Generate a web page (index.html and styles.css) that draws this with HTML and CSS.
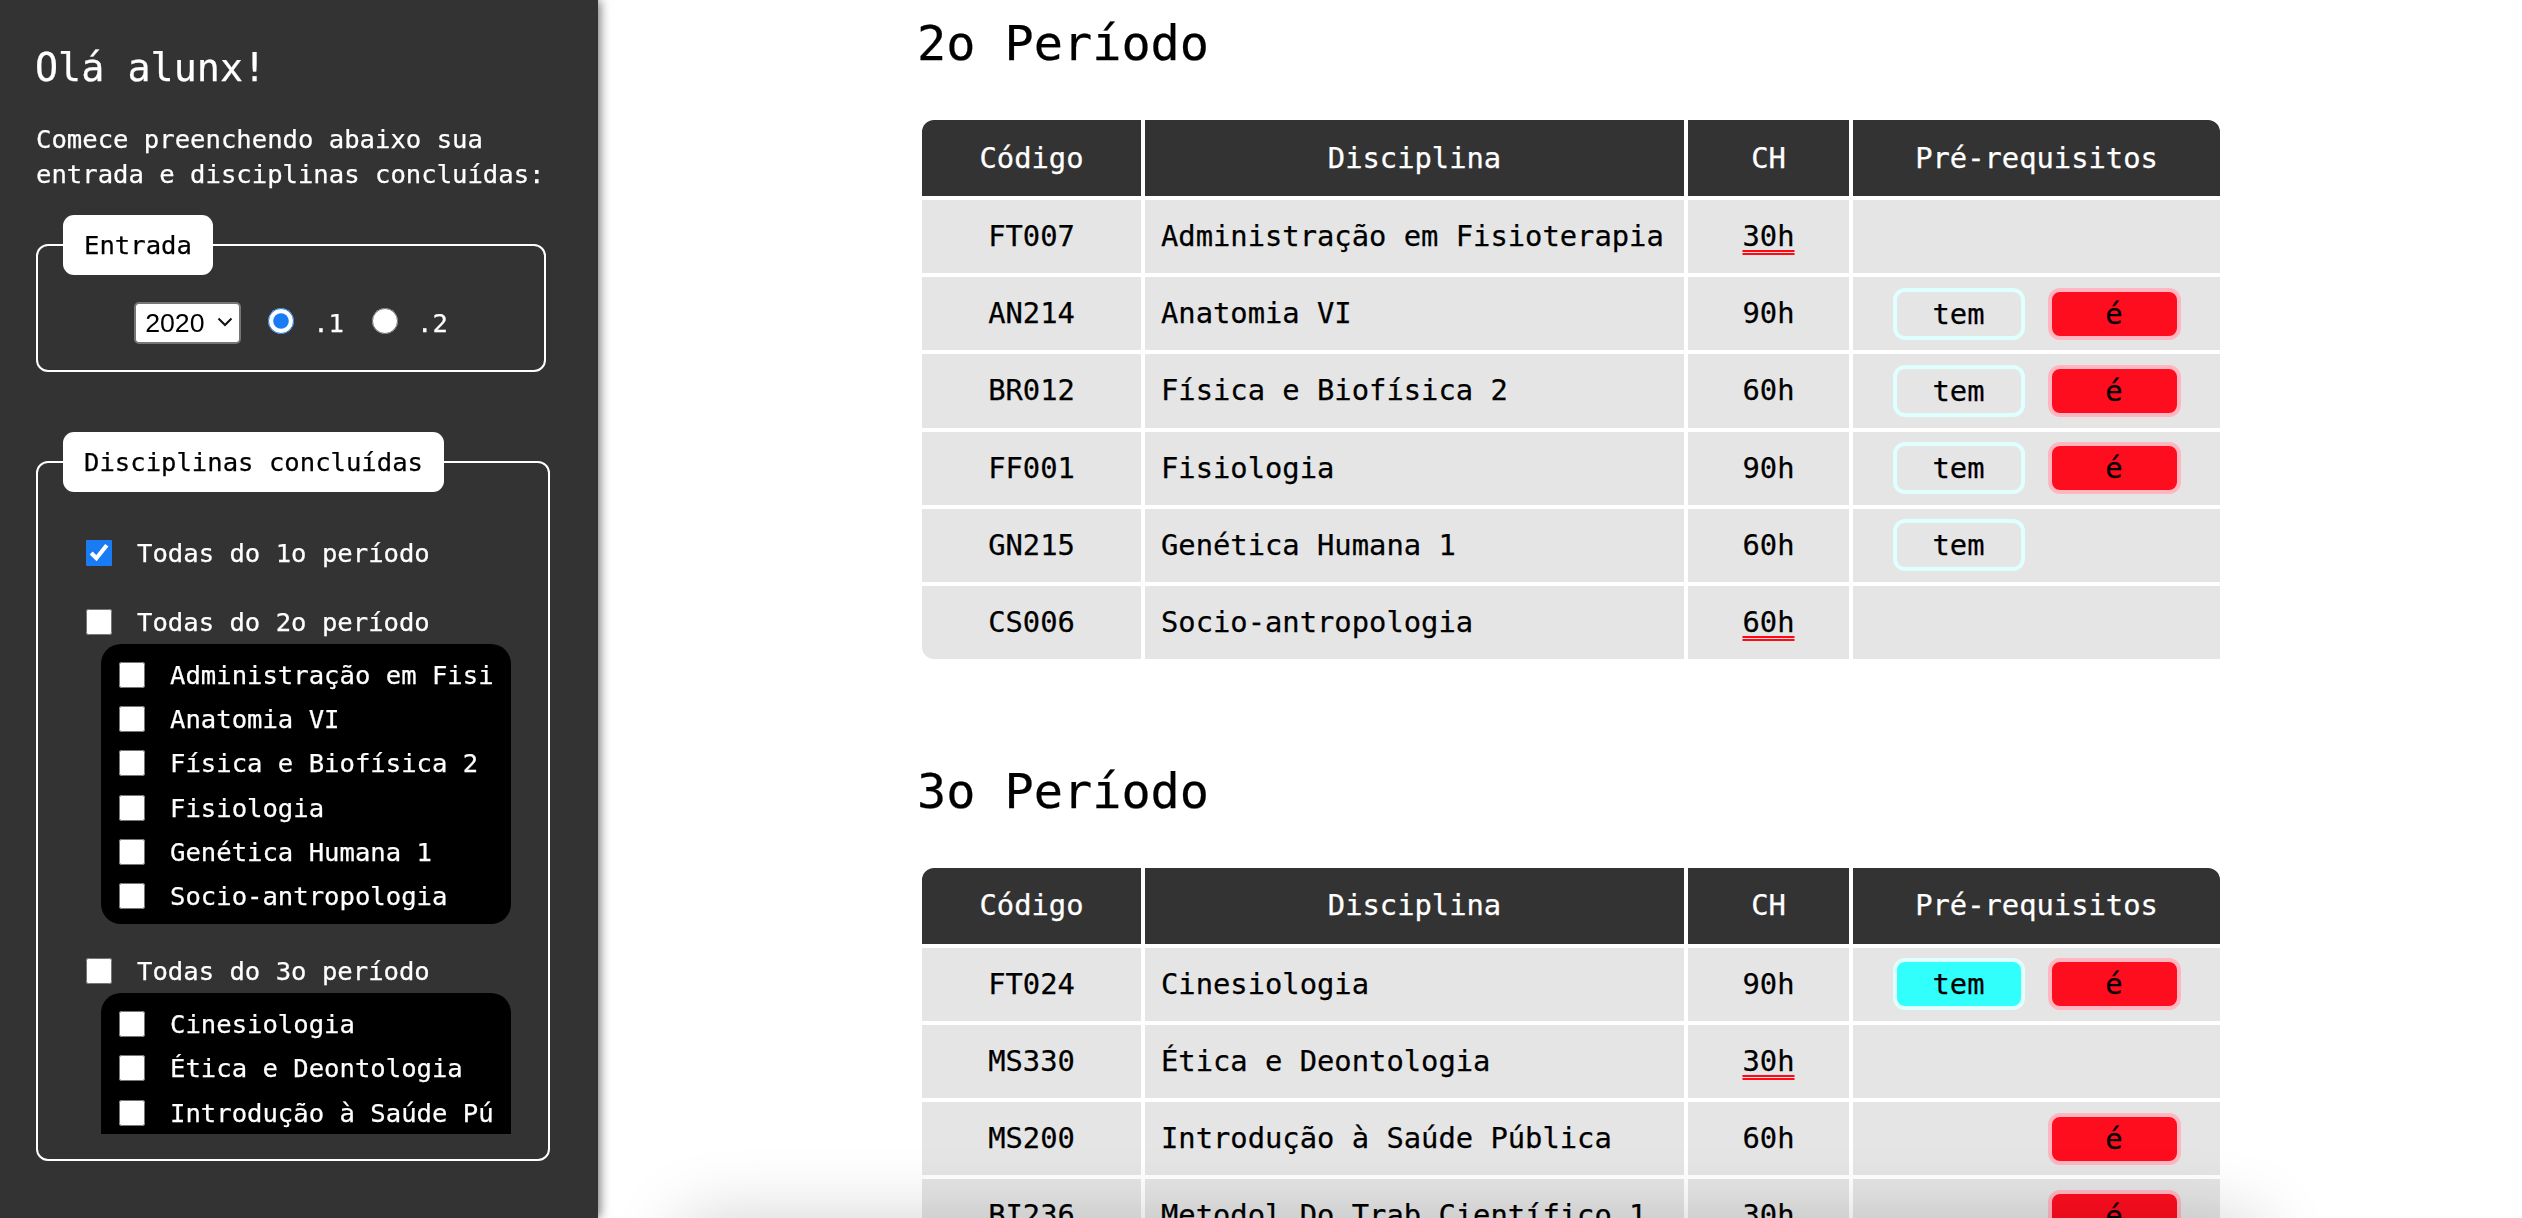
FILE: index.html
```html
<!DOCTYPE html>
<html lang="pt-BR">
<head>
<meta charset="utf-8">
<title>Grade</title>
<link rel="stylesheet" href="styles.css">
</head>
<body>
<aside class="sidebar">
  <h1 class="hello">Olá alunx!</h1>
  <p class="intro">Comece preenchendo abaixo sua entrada e disciplinas concluídas:</p>

  <fieldset class="box entrada">
    <legend>Entrada</legend>
    <div class="entrada-row">
      <span class="select-wrap">
        <select class="ano"><option>2020</option></select>
        <svg class="chev" width="16" height="10" viewBox="0 0 16 10"><polyline points="1.5,1.5 8,8 14.5,1.5" fill="none" stroke="#111" stroke-width="2"/></svg>
      </span>
      <label class="radio"><input type="radio" name="sem" checked><span>.1</span></label>
      <label class="radio"><input type="radio" name="sem"><span>.2</span></label>
    </div>
  </fieldset>

  <fieldset class="box concluidas">
    <legend>Disciplinas concluídas</legend>
    <div class="scroll">
      <div class="group">
        <label class="all"><input type="checkbox" checked><span>Todas do 1o período</span></label>
      </div>
      <div class="group">
        <label class="all"><input type="checkbox"><span>Todas do 2o período</span></label>
        <ul class="list">
          <li><label><input type="checkbox"><span>Administração em Fisioterapia</span></label></li>
          <li><label><input type="checkbox"><span>Anatomia VI</span></label></li>
          <li><label><input type="checkbox"><span>Física e Biofísica 2</span></label></li>
          <li><label><input type="checkbox"><span>Fisiologia</span></label></li>
          <li><label><input type="checkbox"><span>Genética Humana 1</span></label></li>
          <li><label><input type="checkbox"><span>Socio-antropologia</span></label></li>
        </ul>
      </div>
      <div class="group">
        <label class="all"><input type="checkbox"><span>Todas do 3o período</span></label>
        <ul class="list">
          <li><label><input type="checkbox"><span>Cinesiologia</span></label></li>
          <li><label><input type="checkbox"><span>Ética e Deontologia</span></label></li>
          <li><label><input type="checkbox"><span>Introdução à Saúde Pública</span></label></li>
          <li><label><input type="checkbox"><span>Metodol Do Trab Científico 1</span></label></li>
        </ul>
      </div>
    </div>
  </fieldset>
</aside>

<main class="content">
  <section class="periodo">
    <h2>2o Período</h2>
    <table class="grade">
      <thead>
        <tr><th class="c-cod">Código</th><th class="c-dis">Disciplina</th><th class="c-ch">CH</th><th class="c-pre">Pré-requisitos</th></tr>
      </thead>
      <tbody>
        <tr><td class="cod">FT007</td><td class="dis">Administração em Fisioterapia</td><td class="ch"><span class="warn">30h</span></td><td class="pre"></td></tr>
        <tr><td class="cod">AN214</td><td class="dis">Anatomia VI</td><td class="ch">90h</td><td class="pre"><div class="badges"><span class="badge tem">tem</span><span class="badge eh">é</span></div></td></tr>
        <tr><td class="cod">BR012</td><td class="dis">Física e Biofísica 2</td><td class="ch">60h</td><td class="pre"><div class="badges"><span class="badge tem">tem</span><span class="badge eh">é</span></div></td></tr>
        <tr><td class="cod">FF001</td><td class="dis">Fisiologia</td><td class="ch">90h</td><td class="pre"><div class="badges"><span class="badge tem">tem</span><span class="badge eh">é</span></div></td></tr>
        <tr><td class="cod">GN215</td><td class="dis">Genética Humana 1</td><td class="ch">60h</td><td class="pre"><div class="badges"><span class="badge tem">tem</span><span class="badge eh off">é</span></div></td></tr>
        <tr><td class="cod">CS006</td><td class="dis">Socio-antropologia</td><td class="ch"><span class="warn">60h</span></td><td class="pre"></td></tr>
      </tbody>
    </table>
  </section>

  <section class="periodo">
    <h2>3o Período</h2>
    <table class="grade">
      <thead>
        <tr><th class="c-cod">Código</th><th class="c-dis">Disciplina</th><th class="c-ch">CH</th><th class="c-pre">Pré-requisitos</th></tr>
      </thead>
      <tbody>
        <tr><td class="cod">FT024</td><td class="dis">Cinesiologia</td><td class="ch">90h</td><td class="pre"><div class="badges"><span class="badge tem on">tem</span><span class="badge eh">é</span></div></td></tr>
        <tr><td class="cod">MS330</td><td class="dis">Ética e Deontologia</td><td class="ch"><span class="warn">30h</span></td><td class="pre"></td></tr>
        <tr><td class="cod">MS200</td><td class="dis">Introdução à Saúde Pública</td><td class="ch">60h</td><td class="pre"><div class="badges"><span class="badge tem off">tem</span><span class="badge eh">é</span></div></td></tr>
        <tr><td class="cod">BI236</td><td class="dis">Metodol Do Trab Científico 1</td><td class="ch"><span class="warn">30h</span></td><td class="pre"><div class="badges"><span class="badge tem off">tem</span><span class="badge eh">é</span></div></td></tr>
      </tbody>
    </table>
  </section>
</main>
<div class="dock"></div>
</body>
</html>
```

FILE: styles.css
```css
html, body {
  margin: 0;
  padding: 0;
  height: 100%;
}
body {
  display: flex;
  height: 100vh;
  overflow: hidden;
  background: #fff;
  font-family: "DejaVu Sans Mono", monospace;
  color: #000;
  -webkit-text-stroke: 0.25px currentColor;
}

/* ---------- sidebar ---------- */
.sidebar {
  position: relative;
  z-index: 2;
  flex: 0 0 598px;
  box-sizing: border-box;
  height: 100vh;
  background: #333;
  color: #fff;
  padding: 45px 20px 0 36px;
  box-shadow: 2px 0 10px rgba(0, 0, 0, 0.55);
}
.hello {
  margin: 0 0 0 -1px;
  font-size: 38.4px;
  line-height: 46px;
  font-weight: normal;
}
.intro {
  margin: 31px 0 0;
  font-size: 25.6px;
  line-height: 34.5px;
  width: 540px;
}
.box {
  margin: 0;
  border: 2px solid #fff;
  border-radius: 12px;
  padding: 0;
  min-width: 0;
  box-sizing: border-box;
}
.box legend {
  margin-left: 25px;
  background: #fff;
  color: #000;
  border-radius: 11px;
  padding: 0 21px;
  font-size: 25.6px;
  line-height: 60px;
  height: 60px;
}
.entrada {
  width: 510px;
  margin-top: 24px;
}
.entrada-row {
  display: flex;
  align-items: center;
  justify-content: center;
  height: 42px;
  padding: 27px 0 26px;
}
.select-wrap {
  position: relative;
  display: block;
  margin-right: 27px;
}
.ano {
  appearance: none;
  -webkit-appearance: none;
  display: block;
  box-sizing: border-box;
  width: 107px;
  height: 42px;
  margin: 0;
  padding: 0 0 0 9px;
  border: 2px solid #767676;
  border-radius: 5px;
  background: #fff;
  color: #000;
  font-family: "Liberation Sans", Arial, sans-serif;
  font-size: 26.7px;
  -webkit-text-stroke: 0;
}
.chev {
  position: absolute;
  left: 83px;
  top: 15px;
  pointer-events: none;
}
.radio {
  display: flex;
  align-items: center;
  font-size: 25.6px;
  line-height: 30px;
}
.radio input {
  width: 26px;
  height: 26px;
  margin: -5px 19px 0 0;
  accent-color: #1a7cf5;
}
.radio + .radio {
  margin-left: 28px;
}

.concluidas {
  width: 514px;
  margin-top: 60px;
  padding: 0 0 25px;
}
.scroll {
  overflow: hidden;
  padding-top: 39px;
  box-sizing: border-box;
  height: 642px;
}
.group {
  margin-bottom: 25px;
}
.group + .group + .group {
  margin-top: 2px;
}
.all, .list label {
  display: flex;
  align-items: center;
  height: 44px;
  font-size: 25.6px;
  white-space: nowrap;
}
.all {
  padding-left: 48px;
}
.all input, .list input {
  width: 26px;
  height: 26px;
  margin: 0 25px 0 0;
  flex: 0 0 26px;
  accent-color: #1a7cf5;
}
.list {
  list-style: none;
  margin: 0 0 0 63px;
  width: 410px;
  box-sizing: border-box;
  padding: 9px 19px 6px 18px;
  background: #000;
  border-radius: 20px;
}
.list li {
  margin: 0;
  height: 44.2px;
  overflow: hidden;
}
.list label {
  height: 44.2px;
  overflow: hidden;
}
.list label span {
  overflow: hidden;
}

/* ---------- main ---------- */
.content {
  flex: 1 1 auto;
  overflow: hidden;
  padding-left: 322px;
}
.periodo h2 {
  margin: 15px 0 0 -3px;
  font-size: 48.5px;
  line-height: 56px;
  font-weight: normal;
}
.periodo + .periodo h2 {
  margin-top: 102px;
}
.grade {
  margin-top: 47px;
  width: 1302px;
  border-collapse: separate;
  border-spacing: 0;
  font-size: 28.8px;
  table-layout: fixed;
}
.periodo + .periodo .grade {
  margin-top: 46.5px;
}
.grade th, .grade td {
  border: 2px solid #fff;
  padding: 0;
}
.grade th {
  background: #333;
  color: #fff;
  font-weight: normal;
  height: 76px;
  line-height: 33px;
  text-align: center;
}
.grade th.c-cod { width: 219px; border-top-left-radius: 14px; }
.grade th.c-dis { width: 539px; }
.grade th.c-ch { width: 161px; }
.grade th.c-pre { border-top-right-radius: 14px; }
.grade td {
  background: #e5e5e5;
  height: 73.2px;
  line-height: 33px;
  vertical-align: middle;
}
.grade tbody tr:last-child td:first-child {
  border-bottom-left-radius: 14px;
}
.grade td.cod, .grade td.ch { text-align: center; }
.grade td.dis { text-align: left; padding-left: 16px; }
.warn {
  text-decoration: underline double #ff0a14;
  text-decoration-thickness: 2px;
  text-underline-offset: 4px;
}
.badges {
  display: flex;
  justify-content: center;
  gap: 23px;
}
.badge {
  display: block;
  box-sizing: border-box;
  width: 132px;
  height: 52px;
  line-height: 44px;
  border: 4px solid;
  border-radius: 12px;
  text-align: center;
  color: #000;
}
.badge.tem {
  border-color: #e0ffff;
  background: transparent;
}
.badge.tem.on {
  background: #30fffb;
}
.badge.eh {
  width: 133px;
  border-color: #ffb6c1;
  background: #fe0d1e;
}
.badge.off {
  visibility: hidden;
}

/* shadow of a panel lying just below the fold */
.dock {
  position: fixed;
  left: 680px;
  right: 260px;
  top: 100%;
  height: 120px;
  border-radius: 20px;
  background: #fff;
  box-shadow: 0 0 70px rgba(0, 0, 0, 0.18);
  z-index: 1;
}
```
